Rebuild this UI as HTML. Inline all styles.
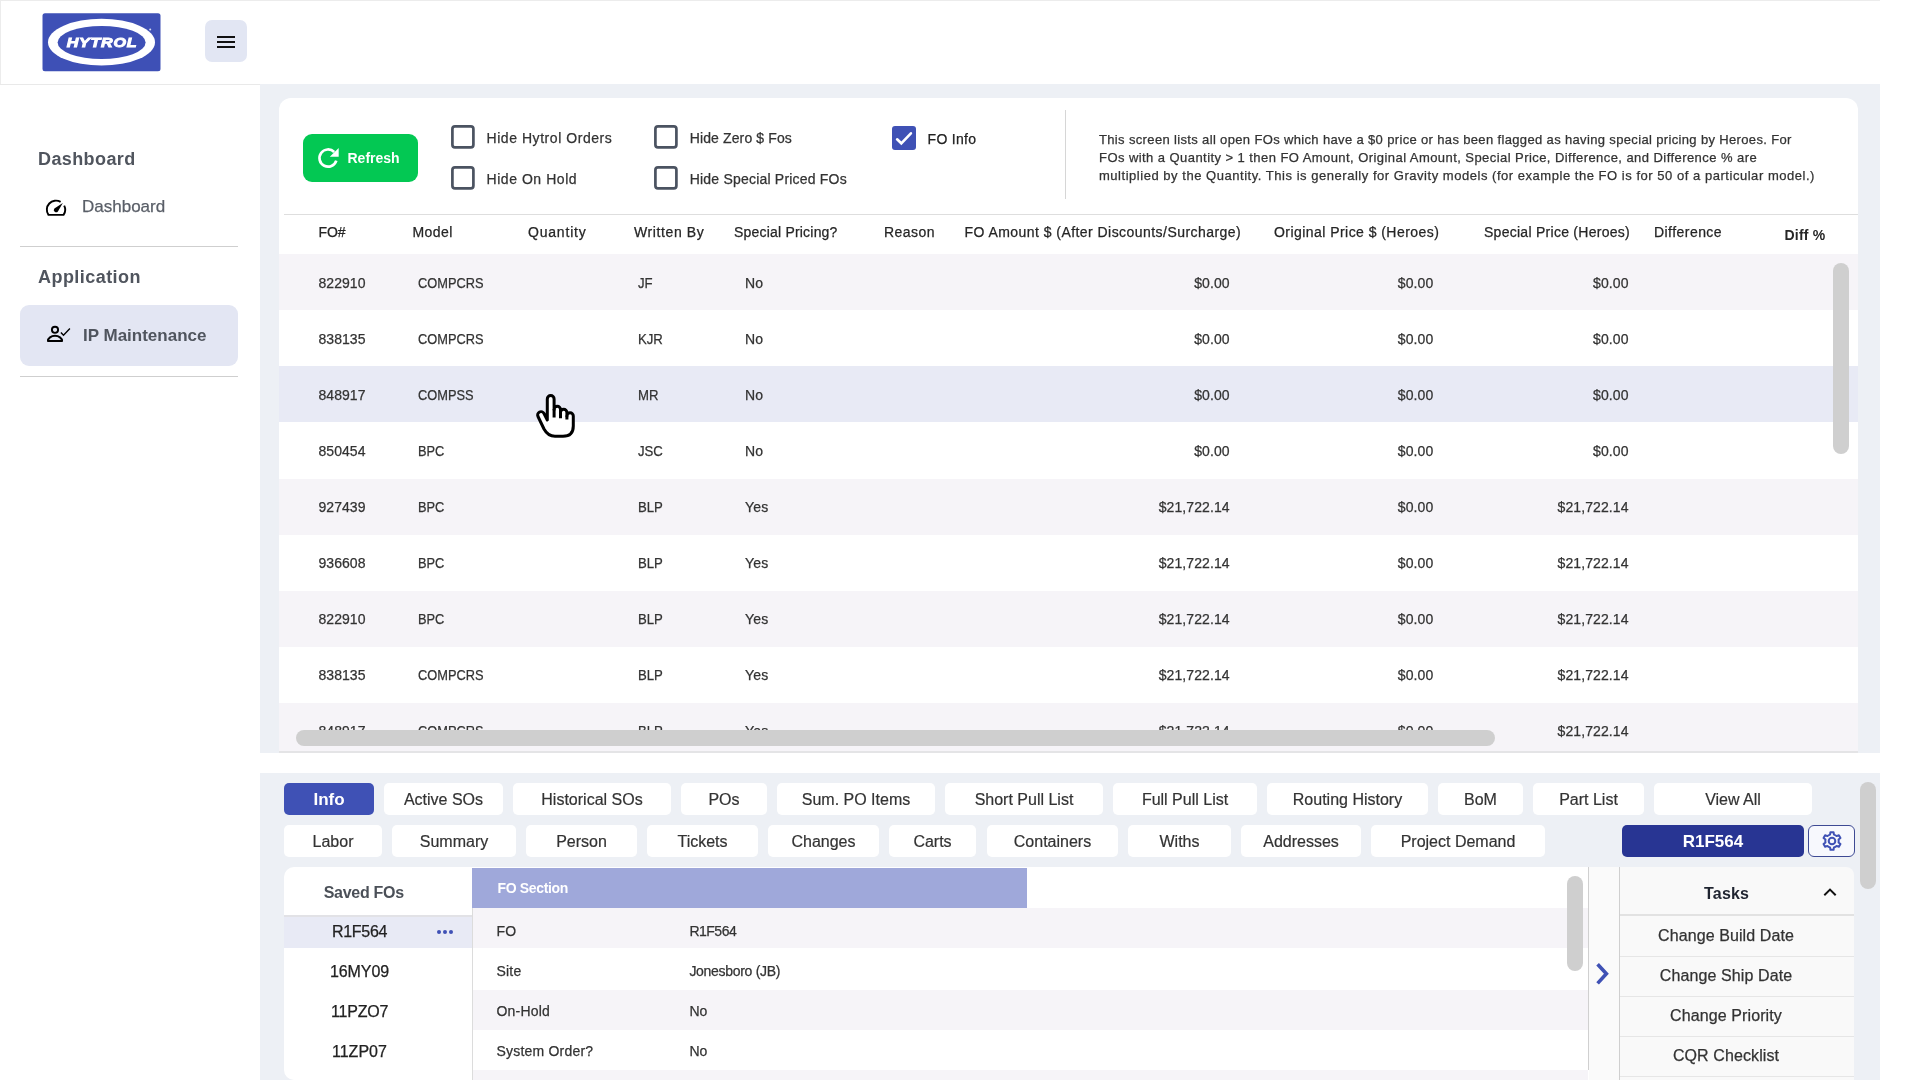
<!DOCTYPE html>
<html><head><meta charset="utf-8"><style>
*{box-sizing:border-box;margin:0;padding:0}
html,body{width:1920px;height:1080px;overflow:hidden;background:#fff;font-family:"Liberation Sans",sans-serif;color:#333}
.t{-webkit-text-stroke:0.25px currentColor}
#root{position:absolute;left:0;top:0;width:1920px;height:1080px;will-change:transform}
.a{position:absolute}
.t{position:absolute;white-space:nowrap;line-height:20px}
.cb{position:absolute;width:24px;height:24px;border:2.5px solid #4b5361;border-radius:3px;background:#fff}
.tab{position:absolute;height:32px;background:#fff;border-radius:5px;font-size:16px;line-height:32px;text-align:center;color:#333;white-space:nowrap;-webkit-text-stroke:0.2px currentColor}
</style></head><body><div id="root">
<div class="a" style="left:0px;top:0px;width:1880px;height:1px;background:#ececec"></div>
<div class="a" style="left:0px;top:0px;width:1px;height:85px;background:#ececec"></div>
<div class="a" style="left:0px;top:84px;width:260px;height:1px;background:#e9e9e9"></div>
<div class="a" style="left:260px;top:84px;width:1620px;height:996px;background:#edf0f5"></div>
<svg class="a" style="left:42px;top:13px" width="119" height="59" viewBox="0 0 119 59">
<rect x="0.5" y="0.3" width="118" height="58" rx="2.5" fill="#3e50b6"/>
<ellipse cx="59.5" cy="29.2" rx="53.5" ry="23.4" fill="#fff"/>
<ellipse cx="59.6" cy="29.5" rx="44" ry="16.5" fill="#3e50b6"/>
<g transform="translate(60 0) scale(1.24 1) translate(-60 0)"><text x="60" y="34.5" text-anchor="middle" font-family="Liberation Sans" font-weight="bold" font-style="italic" font-size="13" fill="#fff" stroke="#fff" stroke-width="0.9" letter-spacing="0.6">HYTROL</text></g>
<circle cx="108.2" cy="16.4" r="1" fill="#fff" opacity="0.8"/>
</svg>
<div class="a" style="left:205px;top:20px;width:42px;height:42px;background:#e2e6f3;border-radius:7px"></div>
<div class="a" style="left:217px;top:36px;width:18px;height:2px;background:#111"></div>
<div class="a" style="left:217px;top:41px;width:18px;height:2px;background:#111"></div>
<div class="a" style="left:217px;top:46px;width:18px;height:2px;background:#111"></div>
<div class="t" style="left:38px;top:148.76px;font-size:18px;color:#50555e;font-weight:bold;letter-spacing:0.4px;-webkit-text-stroke:0;">Dashboard</div>
<svg class="a" style="left:40px;top:194px" width="32" height="28" viewBox="0 0 32 28">
<path d="M20.6 7.9 A9.1 9.1 0 0 0 8.46 20.9 L23.54 20.9 A9.1 9.1 0 0 0 24.2 11.6" fill="none" stroke="#000" stroke-width="1.9" stroke-linejoin="round"/>
<path d="M22.8 9 L17.9 17.4 A2.3 2.3 0 1 1 14.4 14.4 Z" fill="#000"/>
</svg>
<div class="t" style="left:82px;top:196.86px;font-size:17px;color:#5a5f68;font-weight:normal;letter-spacing:0px;">Dashboard</div>
<div class="a" style="left:20px;top:246px;width:218px;height:1px;background:#cfcfcf"></div>
<div class="t" style="left:38px;top:266.76px;font-size:18px;color:#50555e;font-weight:bold;letter-spacing:0.45px;-webkit-text-stroke:0;">Application</div>
<div class="a" style="left:20px;top:305px;width:218px;height:61px;background:#e3e6f3;border-radius:9px"></div>
<svg class="a" style="left:42px;top:320px" width="34" height="28" viewBox="0 0 34 28">
<circle cx="13" cy="9.8" r="3.1" fill="none" stroke="#000" stroke-width="1.9"/>
<path d="M5.95 21 A7.05 5.2 0 0 1 20.05 21 Z" fill="none" stroke="#000" stroke-width="2" stroke-linejoin="round"/>
<path d="M18.9 12.4 L21.5 15.2 L27.9 8.6" fill="none" stroke="#000" stroke-width="1.4"/>
</svg>
<div class="t" style="left:83px;top:326.11px;font-size:17px;color:#50555e;font-weight:bold;letter-spacing:0px;-webkit-text-stroke:0;">IP Maintenance</div>
<div class="a" style="left:20px;top:376px;width:218px;height:1px;background:#cfcfcf"></div>
<div class="a" style="left:279px;top:98px;width:1579px;height:655px;background:#fff;border-radius:12px 12px 0 0;overflow:hidden">
</div>
<div class="a" style="left:303px;top:134px;width:115px;height:48px;background:#03c853;border-radius:9px"></div>
<svg class="a" style="left:310px;top:140px" width="40" height="36" viewBox="0 0 40 36">
<path d="M24.2 12 A8.6 8.6 0 1 0 26.3 20.6" fill="none" stroke="#fff" stroke-width="2.7"/>
<path d="M28.7 8 L28.7 16.7 L19.8 16.7 Z" fill="#fff"/>
</svg>
<div class="t" style="left:347.5px;top:148.15px;font-size:14px;color:#fff;font-weight:bold;letter-spacing:0px;-webkit-text-stroke:0;">Refresh</div>
<svg class="a" style="left:451px;top:125px" width="24" height="24" viewBox="0 0 24 24"><rect x="1.4" y="1.4" width="21" height="21" rx="2.6" fill="#fff" stroke="#4b5361" stroke-width="2.7"/></svg>
<svg class="a" style="left:451px;top:166px" width="24" height="24" viewBox="0 0 24 24"><rect x="1.4" y="1.4" width="21" height="21" rx="2.6" fill="#fff" stroke="#4b5361" stroke-width="2.7"/></svg>
<svg class="a" style="left:654px;top:125px" width="24" height="24" viewBox="0 0 24 24"><rect x="1.4" y="1.4" width="21" height="21" rx="2.6" fill="#fff" stroke="#4b5361" stroke-width="2.7"/></svg>
<svg class="a" style="left:654px;top:166px" width="24" height="24" viewBox="0 0 24 24"><rect x="1.4" y="1.4" width="21" height="21" rx="2.6" fill="#fff" stroke="#4b5361" stroke-width="2.7"/></svg>
<div class="t" style="left:486.5px;top:127.90px;font-size:14px;color:#333;font-weight:normal;letter-spacing:0.55px;">Hide Hytrol Orders</div>
<div class="t" style="left:486.5px;top:168.90px;font-size:14px;color:#333;font-weight:normal;letter-spacing:0.55px;">Hide On Hold</div>
<div class="t" style="left:689.75px;top:127.90px;font-size:14px;color:#333;font-weight:normal;letter-spacing:0.12px;">Hide Zero $ Fos</div>
<div class="t" style="left:689.75px;top:168.90px;font-size:14px;color:#333;font-weight:normal;letter-spacing:0.2px;">Hide Special Priced FOs</div>
<svg class="a" style="left:892px;top:126px" width="24" height="24" viewBox="0 0 24 24">
<rect width="24" height="24" rx="3" fill="#3f51b5"/>
<path d="M5.1 13.3 L9.3 17.3 L18.9 7.3" fill="none" stroke="#fff" stroke-width="2.6" stroke-linecap="round"/>
</svg>
<div class="t" style="left:927.6px;top:129.05px;font-size:14px;color:#222;font-weight:normal;letter-spacing:0.3px;">FO Info</div>
<div class="a" style="left:1065px;top:110px;width:1px;height:89px;background:#d6d6d6"></div>
<div class="t" style="left:1099px;top:129.50px;font-size:13px;color:#333;font-weight:normal;letter-spacing:0.35px;">This screen lists all open FOs which have a $0 price or has been flagged as having special pricing by Heroes. For</div>
<div class="t" style="left:1099px;top:147.50px;font-size:13px;color:#333;font-weight:normal;letter-spacing:0.437px;">FOs with a Quantity &gt; 1 then FO Amount, Original Amount, Special Price, Difference, and Difference % are</div>
<div class="t" style="left:1099px;top:165.50px;font-size:13px;color:#333;font-weight:normal;letter-spacing:0.53px;">multiplied by the Quantity. This is generally for Gravity models (for example the FO is for 50 of a particular model.)</div>
<div class="a" style="left:284px;top:214px;width:1574px;height:1px;background:#dedede"></div>
<div class="t" style="left:318.5px;top:222.15px;font-size:14px;color:#262626;font-weight:normal;letter-spacing:-0.1px;">FO#</div>
<div class="t" style="left:412.5px;top:222.15px;font-size:14px;color:#262626;font-weight:normal;letter-spacing:0.45px;">Model</div>
<div class="t" style="left:528px;top:222.15px;font-size:14px;color:#262626;font-weight:normal;letter-spacing:0.8px;">Quantity</div>
<div class="t" style="left:634px;top:222.15px;font-size:14px;color:#262626;font-weight:normal;letter-spacing:0.6px;">Written By</div>
<div class="t" style="left:734px;top:222.15px;font-size:14px;color:#262626;font-weight:normal;letter-spacing:0.2px;">Special Pricing?</div>
<div class="t" style="left:884px;top:222.15px;font-size:14px;color:#262626;font-weight:normal;letter-spacing:0.45px;">Reason</div>
<div class="t" style="left:964.5px;top:222.15px;font-size:14px;color:#262626;font-weight:normal;letter-spacing:0.45px;">FO Amount $ (After Discounts/Surcharge)</div>
<div class="t" style="left:1274px;top:222.15px;font-size:14px;color:#262626;font-weight:normal;letter-spacing:0.45px;">Original Price $ (Heroes)</div>
<div class="t" style="left:1484px;top:222.15px;font-size:14px;color:#262626;font-weight:normal;letter-spacing:0.27px;">Special Price (Heroes)</div>
<div class="t" style="left:1654px;top:222.15px;font-size:14px;color:#262626;font-weight:normal;letter-spacing:0.45px;">Difference</div>
<div class="t" style="left:1784.5px;top:225.15px;font-size:14px;color:#262626;font-weight:bold;letter-spacing:0.2px;-webkit-text-stroke:0;">Diff %</div>
<div class="a" style="left:0;top:0;width:1920px;height:752px;overflow:hidden">
<div class="a" style="left:279px;top:254.0px;width:1579px;height:56.125px;background:#f6f4f8"></div>
<div class="t" style="left:318.5px;top:273.15px;font-size:14px;color:#333;font-weight:normal;letter-spacing:0.05px;">822910</div>
<div class="t" style="left:418px;top:273.15px;font-size:14px;color:#333;font-weight:normal;letter-spacing:0px;transform:scaleX(0.915);transform-origin:0 0;">COMPCRS</div>
<div class="t" style="left:638px;top:273.15px;font-size:14px;color:#333;font-weight:normal;letter-spacing:0px;transform:scaleX(0.94);transform-origin:0 0;">JF</div>
<div class="t" style="left:745px;top:273.15px;font-size:14px;color:#333;font-weight:normal;letter-spacing:0.2px;">No</div>
<div class="t" style="right:690.25px;top:273.15px;font-size:14px;color:#333;font-weight:normal;letter-spacing:0.1px;text-align:right">$0.00</div>
<div class="t" style="right:486.70000000000005px;top:273.15px;font-size:14px;color:#333;font-weight:normal;letter-spacing:0.1px;text-align:right">$0.00</div>
<div class="t" style="right:291.4000000000001px;top:273.15px;font-size:14px;color:#333;font-weight:normal;letter-spacing:0.1px;text-align:right">$0.00</div>
<div class="t" style="left:318.5px;top:329.15px;font-size:14px;color:#333;font-weight:normal;letter-spacing:0.05px;">838135</div>
<div class="t" style="left:418px;top:329.15px;font-size:14px;color:#333;font-weight:normal;letter-spacing:0px;transform:scaleX(0.915);transform-origin:0 0;">COMPCRS</div>
<div class="t" style="left:638px;top:329.15px;font-size:14px;color:#333;font-weight:normal;letter-spacing:0px;transform:scaleX(0.94);transform-origin:0 0;">KJR</div>
<div class="t" style="left:745px;top:329.15px;font-size:14px;color:#333;font-weight:normal;letter-spacing:0.2px;">No</div>
<div class="t" style="right:690.25px;top:329.15px;font-size:14px;color:#333;font-weight:normal;letter-spacing:0.1px;text-align:right">$0.00</div>
<div class="t" style="right:486.70000000000005px;top:329.15px;font-size:14px;color:#333;font-weight:normal;letter-spacing:0.1px;text-align:right">$0.00</div>
<div class="t" style="right:291.4000000000001px;top:329.15px;font-size:14px;color:#333;font-weight:normal;letter-spacing:0.1px;text-align:right">$0.00</div>
<div class="a" style="left:279px;top:366.25px;width:1579px;height:56.125px;background:#e8eaf5"></div>
<div class="t" style="left:318.5px;top:385.15px;font-size:14px;color:#333;font-weight:normal;letter-spacing:0.05px;">848917</div>
<div class="t" style="left:418px;top:385.15px;font-size:14px;color:#333;font-weight:normal;letter-spacing:0px;transform:scaleX(0.915);transform-origin:0 0;">COMPSS</div>
<div class="t" style="left:638px;top:385.15px;font-size:14px;color:#333;font-weight:normal;letter-spacing:0px;transform:scaleX(0.94);transform-origin:0 0;">MR</div>
<div class="t" style="left:745px;top:385.15px;font-size:14px;color:#333;font-weight:normal;letter-spacing:0.2px;">No</div>
<div class="t" style="right:690.25px;top:385.15px;font-size:14px;color:#333;font-weight:normal;letter-spacing:0.1px;text-align:right">$0.00</div>
<div class="t" style="right:486.70000000000005px;top:385.15px;font-size:14px;color:#333;font-weight:normal;letter-spacing:0.1px;text-align:right">$0.00</div>
<div class="t" style="right:291.4000000000001px;top:385.15px;font-size:14px;color:#333;font-weight:normal;letter-spacing:0.1px;text-align:right">$0.00</div>
<div class="t" style="left:318.5px;top:441.15px;font-size:14px;color:#333;font-weight:normal;letter-spacing:0.05px;">850454</div>
<div class="t" style="left:418px;top:441.15px;font-size:14px;color:#333;font-weight:normal;letter-spacing:0px;transform:scaleX(0.915);transform-origin:0 0;">BPC</div>
<div class="t" style="left:638px;top:441.15px;font-size:14px;color:#333;font-weight:normal;letter-spacing:0px;transform:scaleX(0.94);transform-origin:0 0;">JSC</div>
<div class="t" style="left:745px;top:441.15px;font-size:14px;color:#333;font-weight:normal;letter-spacing:0.2px;">No</div>
<div class="t" style="right:690.25px;top:441.15px;font-size:14px;color:#333;font-weight:normal;letter-spacing:0.1px;text-align:right">$0.00</div>
<div class="t" style="right:486.70000000000005px;top:441.15px;font-size:14px;color:#333;font-weight:normal;letter-spacing:0.1px;text-align:right">$0.00</div>
<div class="t" style="right:291.4000000000001px;top:441.15px;font-size:14px;color:#333;font-weight:normal;letter-spacing:0.1px;text-align:right">$0.00</div>
<div class="a" style="left:279px;top:478.5px;width:1579px;height:56.125px;background:#f6f4f8"></div>
<div class="t" style="left:318.5px;top:497.15px;font-size:14px;color:#333;font-weight:normal;letter-spacing:0.05px;">927439</div>
<div class="t" style="left:418px;top:497.15px;font-size:14px;color:#333;font-weight:normal;letter-spacing:0px;transform:scaleX(0.915);transform-origin:0 0;">BPC</div>
<div class="t" style="left:638px;top:497.15px;font-size:14px;color:#333;font-weight:normal;letter-spacing:0px;transform:scaleX(0.94);transform-origin:0 0;">BLP</div>
<div class="t" style="left:745px;top:497.15px;font-size:14px;color:#333;font-weight:normal;letter-spacing:0.2px;">Yes</div>
<div class="t" style="right:690.25px;top:497.15px;font-size:14px;color:#333;font-weight:normal;letter-spacing:0.1px;text-align:right">$21,722.14</div>
<div class="t" style="right:486.70000000000005px;top:497.15px;font-size:14px;color:#333;font-weight:normal;letter-spacing:0.1px;text-align:right">$0.00</div>
<div class="t" style="right:291.4000000000001px;top:497.15px;font-size:14px;color:#333;font-weight:normal;letter-spacing:0.1px;text-align:right">$21,722.14</div>
<div class="t" style="left:318.5px;top:553.15px;font-size:14px;color:#333;font-weight:normal;letter-spacing:0.05px;">936608</div>
<div class="t" style="left:418px;top:553.15px;font-size:14px;color:#333;font-weight:normal;letter-spacing:0px;transform:scaleX(0.915);transform-origin:0 0;">BPC</div>
<div class="t" style="left:638px;top:553.15px;font-size:14px;color:#333;font-weight:normal;letter-spacing:0px;transform:scaleX(0.94);transform-origin:0 0;">BLP</div>
<div class="t" style="left:745px;top:553.15px;font-size:14px;color:#333;font-weight:normal;letter-spacing:0.2px;">Yes</div>
<div class="t" style="right:690.25px;top:553.15px;font-size:14px;color:#333;font-weight:normal;letter-spacing:0.1px;text-align:right">$21,722.14</div>
<div class="t" style="right:486.70000000000005px;top:553.15px;font-size:14px;color:#333;font-weight:normal;letter-spacing:0.1px;text-align:right">$0.00</div>
<div class="t" style="right:291.4000000000001px;top:553.15px;font-size:14px;color:#333;font-weight:normal;letter-spacing:0.1px;text-align:right">$21,722.14</div>
<div class="a" style="left:279px;top:590.75px;width:1579px;height:56.125px;background:#f6f4f8"></div>
<div class="t" style="left:318.5px;top:609.15px;font-size:14px;color:#333;font-weight:normal;letter-spacing:0.05px;">822910</div>
<div class="t" style="left:418px;top:609.15px;font-size:14px;color:#333;font-weight:normal;letter-spacing:0px;transform:scaleX(0.915);transform-origin:0 0;">BPC</div>
<div class="t" style="left:638px;top:609.15px;font-size:14px;color:#333;font-weight:normal;letter-spacing:0px;transform:scaleX(0.94);transform-origin:0 0;">BLP</div>
<div class="t" style="left:745px;top:609.15px;font-size:14px;color:#333;font-weight:normal;letter-spacing:0.2px;">Yes</div>
<div class="t" style="right:690.25px;top:609.15px;font-size:14px;color:#333;font-weight:normal;letter-spacing:0.1px;text-align:right">$21,722.14</div>
<div class="t" style="right:486.70000000000005px;top:609.15px;font-size:14px;color:#333;font-weight:normal;letter-spacing:0.1px;text-align:right">$0.00</div>
<div class="t" style="right:291.4000000000001px;top:609.15px;font-size:14px;color:#333;font-weight:normal;letter-spacing:0.1px;text-align:right">$21,722.14</div>
<div class="t" style="left:318.5px;top:665.15px;font-size:14px;color:#333;font-weight:normal;letter-spacing:0.05px;">838135</div>
<div class="t" style="left:418px;top:665.15px;font-size:14px;color:#333;font-weight:normal;letter-spacing:0px;transform:scaleX(0.915);transform-origin:0 0;">COMPCRS</div>
<div class="t" style="left:638px;top:665.15px;font-size:14px;color:#333;font-weight:normal;letter-spacing:0px;transform:scaleX(0.94);transform-origin:0 0;">BLP</div>
<div class="t" style="left:745px;top:665.15px;font-size:14px;color:#333;font-weight:normal;letter-spacing:0.2px;">Yes</div>
<div class="t" style="right:690.25px;top:665.15px;font-size:14px;color:#333;font-weight:normal;letter-spacing:0.1px;text-align:right">$21,722.14</div>
<div class="t" style="right:486.70000000000005px;top:665.15px;font-size:14px;color:#333;font-weight:normal;letter-spacing:0.1px;text-align:right">$0.00</div>
<div class="t" style="right:291.4000000000001px;top:665.15px;font-size:14px;color:#333;font-weight:normal;letter-spacing:0.1px;text-align:right">$21,722.14</div>
<div class="a" style="left:279px;top:703.0px;width:1579px;height:56.125px;background:#f6f4f8"></div>
<div class="t" style="left:318.5px;top:721.15px;font-size:14px;color:#333;font-weight:normal;letter-spacing:0.05px;">848917</div>
<div class="t" style="left:418px;top:721.15px;font-size:14px;color:#333;font-weight:normal;letter-spacing:0px;transform:scaleX(0.915);transform-origin:0 0;">COMPCRS</div>
<div class="t" style="left:638px;top:721.15px;font-size:14px;color:#333;font-weight:normal;letter-spacing:0px;transform:scaleX(0.94);transform-origin:0 0;">BLP</div>
<div class="t" style="left:745px;top:721.15px;font-size:14px;color:#333;font-weight:normal;letter-spacing:0.2px;">Yes</div>
<div class="t" style="right:690.25px;top:721.15px;font-size:14px;color:#333;font-weight:normal;letter-spacing:0.1px;text-align:right">$21,722.14</div>
<div class="t" style="right:486.70000000000005px;top:721.15px;font-size:14px;color:#333;font-weight:normal;letter-spacing:0.1px;text-align:right">$0.00</div>
<div class="t" style="right:291.4000000000001px;top:721.15px;font-size:14px;color:#333;font-weight:normal;letter-spacing:0.1px;text-align:right">$21,722.14</div>
</div>
<div class="a" style="left:279px;top:751px;width:1579px;height:2px;background:#e4e4e6"></div>
<div class="a" style="left:1833px;top:263px;width:16px;height:191px;background:#cfcfcf;border-radius:8px"></div>
<div class="a" style="left:296px;top:730px;width:1199px;height:16px;background:#cfcfcf;border-radius:8px"></div>
<div class="a" style="left:260px;top:753px;width:1620px;height:20px;background:#fff"></div>
<svg class="a" style="left:530px;top:385px" width="60" height="60" viewBox="0 0 60 60">
<path d="M17.3 35 L17.3 14 A3.4 3.4 0 0 1 24.1 14 L24.1 24.5 A3.2 3.2 0 0 1 30.5 24.5 L30.5 27.5 A3.2 3.2 0 0 1 36.9 27.5 L36.9 31 A3.2 3.2 0 0 1 43.3 31 L43.3 41 Q43.3 51.3 33 51.3 L25 51.3 Q18 51.3 14 44 L8 31.5 A3.3 3.3 0 0 1 14 28.5 Z" fill="#fff" stroke="#000" stroke-width="3" stroke-linejoin="round"/>
<path d="M24.1 24 L24.1 32.5 M30.5 27 L30.5 33.3 M36.9 30.5 L36.9 34.5" stroke="#000" stroke-width="3"/>
</svg>
<div class="tab" style="left:284px;top:783px;width:90px;background:#3f51b5;color:#fff;font-weight:bold;font-size:17px;padding-top:1px;-webkit-text-stroke:0">Info</div>
<div class="tab" style="left:384px;top:783px;width:119px;padding-top:1px">Active SOs</div>
<div class="tab" style="left:513px;top:783px;width:158px;padding-top:1px">Historical SOs</div>
<div class="tab" style="left:681px;top:783px;width:86px;padding-top:1px">POs</div>
<div class="tab" style="left:777px;top:783px;width:158px;padding-top:1px">Sum. PO Items</div>
<div class="tab" style="left:945px;top:783px;width:158px;padding-top:1px">Short Pull List</div>
<div class="tab" style="left:1113px;top:783px;width:144px;padding-top:1px">Full Pull List</div>
<div class="tab" style="left:1267px;top:783px;width:161px;padding-top:1px">Routing History</div>
<div class="tab" style="left:1438px;top:783px;width:85px;padding-top:1px">BoM</div>
<div class="tab" style="left:1533px;top:783px;width:111px;padding-top:1px">Part List</div>
<div class="tab" style="left:1654px;top:783px;width:158px;padding-top:1px">View All</div>
<div class="tab" style="left:284px;top:825px;width:98px;padding-top:1px">Labor</div>
<div class="tab" style="left:392px;top:825px;width:124px;padding-top:1px">Summary</div>
<div class="tab" style="left:526px;top:825px;width:111px;padding-top:1px">Person</div>
<div class="tab" style="left:647px;top:825px;width:111px;padding-top:1px">Tickets</div>
<div class="tab" style="left:768px;top:825px;width:111px;padding-top:1px">Changes</div>
<div class="tab" style="left:889px;top:825px;width:87px;padding-top:1px">Carts</div>
<div class="tab" style="left:987px;top:825px;width:131px;padding-top:1px">Containers</div>
<div class="tab" style="left:1128px;top:825px;width:103px;padding-top:1px">Withs</div>
<div class="tab" style="left:1241px;top:825px;width:120px;padding-top:1px">Addresses</div>
<div class="tab" style="left:1371px;top:825px;width:174px;padding-top:1px">Project Demand</div>
<div class="tab" style="left:1622px;top:825px;width:182px;background:#283593;color:#fff;font-weight:bold;font-size:17px;padding-top:1px;-webkit-text-stroke:0">R1F564</div>
<div class="a" style="left:1808px;top:825px;width:47px;height:32px;background:#f7f8fd;border:1px solid #3e4a94;border-radius:6px"></div>
<svg class="a" style="left:1820px;top:829px" width="24" height="24" viewBox="0 0 24 24">
<path fill="none" stroke="#3f51b5" stroke-width="2" stroke-linejoin="round" d="M10.04 5.59 L10.44 3.14 L13.56 3.14 L13.96 5.59 A6.70 6.70 0 0 1 16.57 7.10 L18.89 6.21 L20.46 8.92 L18.53 10.49 A6.70 6.70 0 0 1 18.53 13.51 L20.46 15.08 L18.89 17.79 L16.57 16.90 A6.70 6.70 0 0 1 13.96 18.41 L13.56 20.86 L10.44 20.86 L10.04 18.41 A6.70 6.70 0 0 1 7.43 16.90 L5.11 17.79 L3.54 15.08 L5.47 13.51 A6.70 6.70 0 0 1 5.47 10.49 L3.54 8.92 L5.11 6.21 L7.43 7.10 A6.70 6.70 0 0 1 10.04 5.59 Z"/>
<circle cx="12" cy="12" r="3.3" fill="none" stroke="#3f51b5" stroke-width="2"/>
</svg>
<div class="a" style="left:1860px;top:782px;width:16px;height:107px;background:#cfcfcf;border-radius:8px"></div>
<div class="a" style="left:284px;top:867px;width:200px;height:213px;background:#fff;border-radius:10px"></div>
<div class="t" style="left:323.75px;top:883.16px;font-size:16px;color:#4b5058;font-weight:bold;letter-spacing:-0.3px;-webkit-text-stroke:0;">Saved FOs</div>
<div class="a" style="left:284px;top:915px;width:188px;height:2px;background:#e2e2e6"></div>
<div class="a" style="left:284px;top:917px;width:188px;height:31px;background:#e8eaf5"></div>
<div class="t" style="left:332px;top:922.21px;font-size:16px;color:#222;font-weight:normal;letter-spacing:-0.3px;">R1F564</div>
<div class="a" style="left:437px;top:930px;width:4px;height:4px;background:#3f51b5;border-radius:50%"></div>
<div class="a" style="left:443px;top:930px;width:4px;height:4px;background:#3f51b5;border-radius:50%"></div>
<div class="a" style="left:449px;top:930px;width:4px;height:4px;background:#3f51b5;border-radius:50%"></div>
<div class="t" style="left:330px;top:962.46px;font-size:16px;color:#222;font-weight:normal;letter-spacing:-0.1px;">16MY09</div>
<div class="t" style="left:331px;top:1002.21px;font-size:16px;color:#222;font-weight:normal;letter-spacing:-0.2px;">11PZO7</div>
<div class="t" style="left:332px;top:1042.21px;font-size:16px;color:#222;font-weight:normal;letter-spacing:0px;">11ZP07</div>
<div class="a" style="left:472px;top:867px;width:1117px;height:213px;background:#fff"></div>
<div class="a" style="left:472px;top:868px;width:555px;height:40px;background:#9fa8da"></div>
<div class="t" style="left:497.5px;top:878.15px;font-size:14px;color:#fff;font-weight:bold;letter-spacing:-0.35px;-webkit-text-stroke:0;">FO Section</div>
<div class="a" style="left:472px;top:908px;width:1116px;height:40px;background:#f6f4f8"></div>
<div class="t" style="left:496.5px;top:921.15px;font-size:14px;color:#333;font-weight:normal;letter-spacing:0.2px;">FO</div>
<div class="t" style="left:689.4px;top:921.15px;font-size:14px;color:#333;font-weight:normal;letter-spacing:-0.5px;">R1F564</div>
<div class="t" style="left:496.5px;top:961.15px;font-size:14px;color:#333;font-weight:normal;letter-spacing:0.2px;">Site</div>
<div class="t" style="left:689.4px;top:961.15px;font-size:14px;color:#333;font-weight:normal;letter-spacing:-0.3px;">Jonesboro (JB)</div>
<div class="a" style="left:472px;top:990px;width:1116px;height:40px;background:#f6f4f8"></div>
<div class="t" style="left:496.5px;top:1001.15px;font-size:14px;color:#333;font-weight:normal;letter-spacing:0.2px;">On-Hold</div>
<div class="t" style="left:689.4px;top:1001.15px;font-size:14px;color:#333;font-weight:normal;letter-spacing:0.1px;">No</div>
<div class="t" style="left:496.5px;top:1041.15px;font-size:14px;color:#333;font-weight:normal;letter-spacing:0.2px;">System Order?</div>
<div class="t" style="left:689.4px;top:1041.15px;font-size:14px;color:#333;font-weight:normal;letter-spacing:0.1px;">No</div>
<div class="a" style="left:472px;top:1070px;width:1116px;height:10px;background:#f6f4f8"></div>
<div class="a" style="left:472px;top:908px;width:1px;height:172px;background:#dcdcdc"></div>
<div class="a" style="left:1567px;top:876px;width:16px;height:95px;background:#cfcfcf;border-radius:8px"></div>
<div class="a" style="left:1588px;top:867px;width:1px;height:203px;background:#d0d0d0"></div>
<div class="a" style="left:1589px;top:867px;width:30px;height:213px;background:#fafafa"></div>
<svg class="a" style="left:1593px;top:961px" width="20" height="26" viewBox="0 0 20 26">
<path d="M4.6 3.2 L13.4 12.8 L4.6 22.4" fill="none" stroke="#3f51b5" stroke-width="3.6"/>
</svg>
<div class="a" style="left:1619px;top:867px;width:235px;height:213px;background:#f9f9f9;border-radius:0 8px 0 0;border-left:1px solid #cfcfcf"></div>
<div class="t" style="left:1704px;top:884.06px;font-size:16px;color:#1f2430;font-weight:bold;letter-spacing:0.2px;-webkit-text-stroke:0;">Tasks</div>
<svg class="a" style="left:1821px;top:885px" width="18" height="14" viewBox="0 0 18 14">
<path d="M3.3 10.2 L9 4.6 L14.7 10.2" fill="none" stroke="#111" stroke-width="2"/>
</svg>
<div class="a" style="left:1620px;top:914px;width:234px;height:2px;background:#e2e2e2"></div>
<div class="t" style="left:1426px;width:600px;text-align:center;top:926.46px;font-size:16px;color:#333;font-weight:normal;letter-spacing:0.1px">Change Build Date</div>
<div class="a" style="left:1620px;top:956px;width:234px;height:1px;background:#e6e6e6"></div>
<div class="t" style="left:1426px;width:600px;text-align:center;top:966.46px;font-size:16px;color:#333;font-weight:normal;letter-spacing:0.1px">Change Ship Date</div>
<div class="a" style="left:1620px;top:996px;width:234px;height:1px;background:#e6e6e6"></div>
<div class="t" style="left:1426px;width:600px;text-align:center;top:1006.46px;font-size:16px;color:#333;font-weight:normal;letter-spacing:0.1px">Change Priority</div>
<div class="a" style="left:1620px;top:1036px;width:234px;height:1px;background:#e6e6e6"></div>
<div class="t" style="left:1426px;width:600px;text-align:center;top:1046.46px;font-size:16px;color:#333;font-weight:normal;letter-spacing:0.1px">CQR Checklist</div>
<div class="a" style="left:1620px;top:1076px;width:234px;height:1px;background:#e6e6e6"></div>
</div></body></html>
